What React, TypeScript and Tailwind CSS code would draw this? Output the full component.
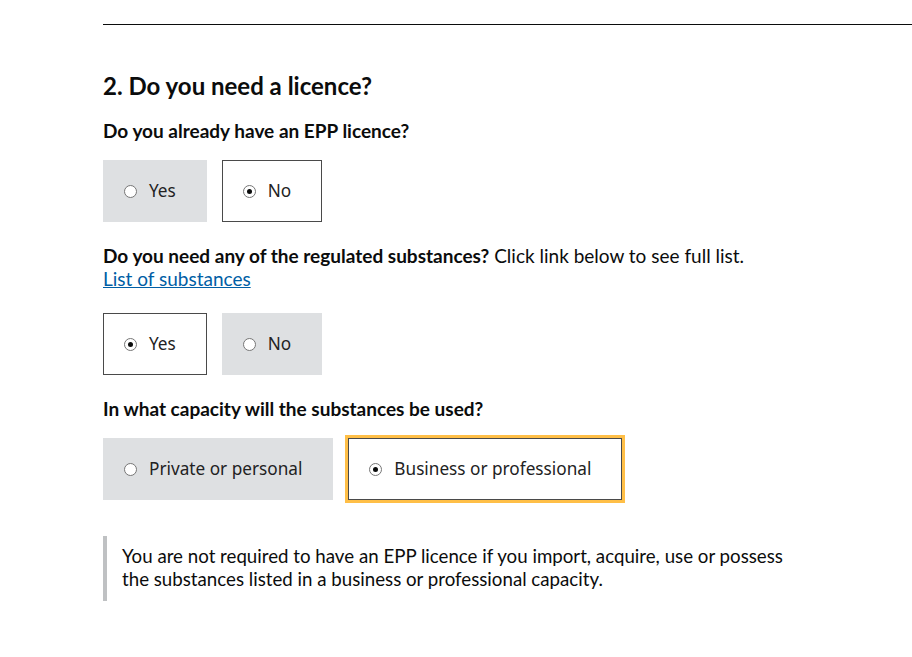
import React from "react";

const body = { fontFamily: "Lato, 'Liberation Sans', sans-serif" };
const opt = { fontFamily: "'Noto Sans', 'Open Sans', sans-serif" };

function Radio({ checked }: { checked: boolean }) {
  return (
    <span className="relative inline-flex h-[13px] w-[13px] shrink-0 items-center justify-center rounded-full border border-[#767676] bg-white">
      {checked && <span className="h-[5px] w-[5px] rounded-full bg-[#0b0c0c]" />}
    </span>
  );
}

function Option({ label, checked, focus }: { label: string; checked: boolean; focus?: boolean }) {
  return (
    <div
      className={
        "flex h-[62px] items-center gap-[12px] border pl-[20px] pr-[30px] " +
        (checked ? "border-[#4a4a4a] bg-white " : "border-[#dee0e2] bg-[#dee0e2] ") +
        (focus ? "outline-[3px] outline-solid outline-[#ffbf47]" : "")
      }
    >
      <Radio checked={checked} />
      <span className="text-[17.2px] leading-none text-[#222]" style={opt}>
        {label}
      </span>
    </div>
  );
}

export default function App() {
  return (
    <div className="min-h-[657px] bg-white pl-[103px] text-[#0b0c0c]" style={body}>
      <div className="pt-[24px]">
        <div className="border-t border-[#0b0c0c]" />
      </div>
      <h2 className="mt-[46px] text-[24px] font-bold leading-[30px]">2. Do you need a licence?</h2>

      <p className="mt-[18px] text-[19px] font-bold leading-[24px]">Do you already have an EPP licence?</p>
      <div className="mt-[17px] flex gap-[15px]">
        <Option label="Yes" checked={false} />
        <Option label="No" checked={true} />
      </div>

      <p className="mt-[22px] text-[19px] leading-[23px]">
        <span className="font-bold">Do you need any of the regulated substances?</span> Click link below to see full list.
        <br />
        <a href="#" className="text-[#005ea5] underline">List of substances</a>
      </p>
      <div className="mt-[23px] flex gap-[15px]">
        <Option label="Yes" checked={true} />
        <Option label="No" checked={false} />
      </div>

      <p className="mt-[22px] text-[19px] font-bold leading-[24px]">In what capacity will the substances be used?</p>
      <div className="mt-[17px] flex gap-[15px]">
        <Option label="Private or personal" checked={false} />
        <Option label="Business or professional" checked={true} focus />
      </div>

      <div className="mt-[36px] border-l-[4px] border-[#bfc1c3] pb-[10px] pl-[15px] pt-[9px]">
        <p className="text-[18.7px] leading-[23px]">
          You are not required to have an EPP licence if you import, acquire, use or possess
          <br />
          the substances listed in a business or professional capacity.
        </p>
      </div>
    </div>
  );
}
